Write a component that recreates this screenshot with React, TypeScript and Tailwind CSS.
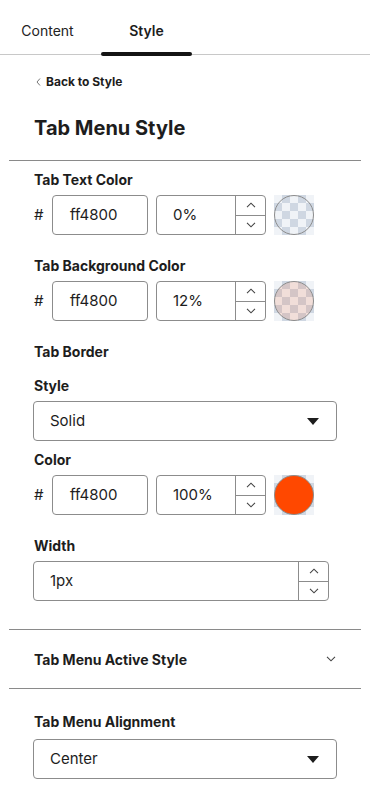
import React from "react";

const ChevUp = () => (
  <svg width="10" height="6" viewBox="0 0 10 6" fill="none" stroke="#444" strokeWidth="1.1">
    <path d="M1 5.2 L5 1.2 L9 5.2" />
  </svg>
);
const ChevDown = () => (
  <svg width="10" height="6" viewBox="0 0 10 6" fill="none" stroke="#444" strokeWidth="1.1">
    <path d="M1 0.8 L5 4.8 L9 0.8" />
  </svg>
);

const Stepper = () => (
  <div className="w-[30px] h-full border-l border-[#8c8c8c] flex flex-col">
    <div className="flex-1 flex items-center justify-center border-b border-[#8c8c8c]">
      <ChevUp />
    </div>
    <div className="flex-1 flex items-center justify-center">
      <ChevDown />
    </div>
  </div>
);

const Swatch = ({ fill }: { fill: string }) => (
  <div className="w-[40px] h-[40px] bg-[repeating-conic-gradient(#cfd7e2_0_25%,#f0f3f7_0_50%)] bg-[length:16px_16px] bg-[position:0_0] flex items-center justify-center">
    <div className={`w-[40px] h-[40px] rounded-full border border-[#8c8c8c] ${fill}`} />
  </div>
);

const ColorRow = ({ pct, fill }: { pct: string; fill: string }) => (
  <div className="flex items-center h-[40px] pl-[34px] gap-2">
    <span className="w-[10px] text-[15px]">#</span>
    <div className="w-[96px] h-[40px] border border-[#8c8c8c] rounded-[4px] flex items-center pl-[17px] text-[15px]">
      ff4800
    </div>
    <div className="w-[110px] h-[40px] border border-[#8c8c8c] rounded-[4px] flex items-center overflow-hidden">
      <span className="flex-1 pl-[16px] text-[15px]">{pct}</span>
      <Stepper />
    </div>
    <Swatch fill={fill} />
  </div>
);

const Caret = () => (
  <svg width="12" height="7" viewBox="0 0 12 7">
    <path d="M0 0 L12 0 L6 7 Z" fill="#1d1d1d" />
  </svg>
);

const Label = ({ children, className = "" }: { children: React.ReactNode; className?: string }) => (
  <div className={`pl-[34px] text-[14px] leading-[18px] font-bold ${className}`}>{children}</div>
);

export default function App() {
  return (
    <div className="w-[370px] min-h-[791px] bg-white text-[#1d1d1d] font-['Inter',sans-serif]">
      <div className="h-[55px] border-b border-[#c8c8c8] flex">
        <div className="w-[95px] flex items-center justify-center pt-[6px] text-[14px] text-[#222]">Content</div>
        <div className="relative w-[91px] ml-[6px] flex items-center justify-center pt-[6px] text-[14px] font-semibold">
          Style
          <div className="absolute left-0 right-0 -bottom-[2px] h-[4px] rounded-full bg-[#141414]" />
        </div>
      </div>

      <div className="mt-[19px] pl-[36px] flex items-center h-[16px] gap-[5px]">
        <svg width="5" height="8" viewBox="0 0 5 8" fill="none" stroke="#777" strokeWidth="1">
          <path d="M4 0.5 L1 4 L4 7.5" />
        </svg>
        <span className="text-[12px] font-bold">Back to Style</span>
      </div>

      <div className="mt-[26px] pl-[34px] h-[24px] leading-[24px] text-[20px] font-bold">Tab Menu Style</div>

      <div className="mt-[20px] mx-[9px] border-t border-[#8a8a8a]" />

      <Label className="mt-[10px]">Tab Text Color</Label>
      <div className="mt-[6px]">
        <ColorRow pct="0%" fill="bg-transparent" />
      </div>

      <Label className="mt-[22px]">Tab Background Color</Label>
      <div className="mt-[6px]">
        <ColorRow pct="12%" fill="bg-[#ff48001f]" />
      </div>

      <Label className="mt-[22px]">Tab Border</Label>
      <Label className="mt-[16px]">Style</Label>
      <div className="mt-[6px] ml-[33px] w-[304px] h-[40px] border border-[#8c8c8c] rounded-[4px] flex items-center justify-between pl-[16px] pr-[17px] text-[15px]">
        <span>Solid</span>
        <Caret />
      </div>

      <Label className="mt-[10px]">Color</Label>
      <div className="mt-[6px]">
        <ColorRow pct="100%" fill="bg-[#ff4800]" />
      </div>

      <Label className="mt-[22px]">Width</Label>
      <div className="mt-[6px] ml-[33px] w-[296px] h-[40px] border border-[#8c8c8c] rounded-[4px] flex items-center overflow-hidden">
        <span className="flex-1 pl-[16px] text-[15px]">1px</span>
        <Stepper />
      </div>

      <div className="mt-[28px] mx-[9px] border-t border-[#8a8a8a]" />

      <div className="mt-[20px] pl-[34px] pr-[34px] h-[18px] flex items-center justify-between">
        <span className="text-[14px] font-bold">Tab Menu Active Style</span>
        <svg width="10" height="6" viewBox="0 0 10 6" fill="none" stroke="#444" strokeWidth="1.1">
          <path d="M1 0.8 L5 4.8 L9 0.8" />
        </svg>
      </div>

      <div className="mt-[20px] mx-[9px] border-t border-[#8a8a8a]" />

      <Label className="mt-[24px]">Tab Menu Alignment</Label>
      <div className="mt-[8px] ml-[33px] w-[304px] h-[40px] border border-[#8c8c8c] rounded-[4px] flex items-center justify-between pl-[16px] pr-[17px] text-[15px]">
        <span>Center</span>
        <Caret />
      </div>
    </div>
  );
}
